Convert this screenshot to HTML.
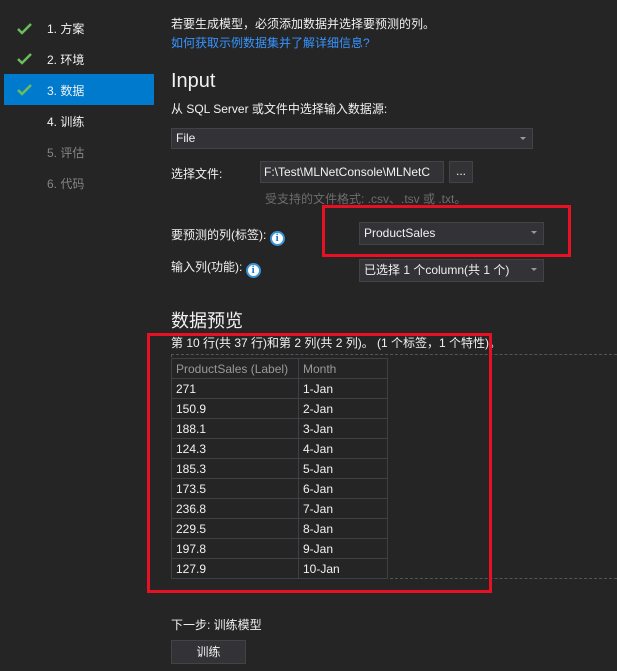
<!DOCTYPE html>
<html><head><meta charset="utf-8"><style>
*{margin:0;padding:0;box-sizing:border-box}
body{width:617px;height:671px;background:#252526;color:#f1f1f1;font-family:"Liberation Sans","Noto Sans CJK SC",sans-serif;font-size:12px;position:relative;overflow:hidden}
.a{position:absolute;white-space:nowrap}
.nav{left:47px;font-size:12px}
.sel{position:absolute;left:4px;top:74px;width:150px;height:31px;background:#007acc}
.dd{position:absolute;background:#333337;border:1px solid #434346;padding-left:4px;line-height:19px;font-size:12px}
.arr{position:absolute;right:6px;top:8px;border-left:3px solid transparent;border-right:3px solid transparent;border-top:3px solid #999}
.red{position:absolute;border:3px solid #e81123}
table{position:absolute;left:171px;top:358px;border-collapse:collapse;font-size:12px}
td{border:1px solid #3f3f46;height:20px;padding:0 4px;line-height:18px}
.info{display:inline-block;width:15px;height:15px;border-radius:50%;background:#fff;border:2px solid #3794d8;color:#1c74c8;font-size:11px;font-weight:bold;text-align:center;line-height:11px;vertical-align:-2px;font-family:"Liberation Serif",serif}
</style></head><body>
<div class="sel"></div>
<svg class="a" style="left:16px;top:20px" width="18" height="100"><g fill="none" stroke="#6bbd5b" stroke-width="2.5"><path d="M2 9l4 4 9-9"/><path d="M2 39l4 4 9-9"/><path d="M2 70l4 4 9-9"/></g></svg>
<div class="a nav" style="top:20px">1. 方案</div>
<div class="a nav" style="top:51px">2. 环境</div>
<div class="a nav" style="top:82px">3. 数据</div>
<div class="a nav" style="top:113px">4. 训练</div>
<div class="a nav" style="top:144px;color:#858585">5. 评估</div>
<div class="a nav" style="top:175px;color:#858585">6. 代码</div>

<div class="a" style="left:171px;top:15px">若要生成模型，必须添加数据并选择要预测的列。</div>
<div class="a" style="left:171px;top:34px;color:#3794ff">如何获取示例数据集并了解详细信息?</div>
<div class="a" style="left:171px;top:70px;font-size:20px">Input</div>
<div class="a" style="left:171px;top:100px">从 SQL Server 或文件中选择输入数据源:</div>
<div class="dd" style="left:171px;top:128px;width:362px;height:21px">File<span class="arr"></span></div>
<div class="a" style="left:171px;top:165px">选择文件:</div>
<div class="dd" style="left:260px;top:161px;width:184px;height:22px;overflow:hidden;line-height:20px;padding-left:3px">F:\Test\MLNetConsole\MLNetC</div>
<div class="dd" style="left:449px;top:161px;width:24px;height:22px;padding:0;text-align:center;line-height:18px">...</div>
<div class="a" style="left:265px;top:190px;color:#6d6d6d">受支持的文件格式: .csv、.tsv 或 .txt。</div>
<div class="a" style="left:171px;top:226px">要预测的列(标签): <span class="info">i</span></div>
<div class="dd" style="left:359px;top:222px;width:185px;height:23px;line-height:21px">ProductSales<span class="arr"></span></div>
<div class="red" style="left:322px;top:205px;width:249px;height:52px"></div>
<div class="a" style="left:171px;top:258px">输入列(功能): <span class="info">i</span></div>
<div class="dd" style="left:359px;top:259px;width:185px;height:23px;line-height:21px">已选择 1 个column(共 1 个)<span class="arr"></span></div>
<div class="a" style="left:171px;top:307px;font-size:18px">数据预览</div>
<div class="a" style="left:171px;top:334px">第 10 行(共 37 行)和第 2 列(共 2 列)。 (1 个标签，1 个特性)。</div>
<div class="a" style="left:171px;top:354px;width:446px;border-top:1px dashed #555"></div>
<div class="a" style="left:171px;top:578px;width:446px;border-top:1px dashed #555"></div>
<div class="a" style="left:171px;top:354px;height:224px;border-left:1px dashed #555"></div>
<table>
<tr style="color:#999"><td style="width:127px">ProductSales (Label)</td><td style="width:89px">Month</td></tr>
<tr><td>271</td><td>1-Jan</td></tr><tr><td>150.9</td><td>2-Jan</td></tr><tr><td>188.1</td><td>3-Jan</td></tr><tr><td>124.3</td><td>4-Jan</td></tr><tr><td>185.3</td><td>5-Jan</td></tr><tr><td>173.5</td><td>6-Jan</td></tr><tr><td>236.8</td><td>7-Jan</td></tr><tr><td>229.5</td><td>8-Jan</td></tr><tr><td>197.8</td><td>9-Jan</td></tr><tr><td>127.9</td><td>10-Jan</td></tr>
</table>
<div class="red" style="left:147px;top:333px;width:345px;height:260px"></div>
<div class="a" style="left:171px;top:616px">下一步: 训练模型</div>
<div class="dd" style="left:171px;top:640px;width:75px;height:24px;text-align:center;padding:0;line-height:22px">训练</div>
</body></html>
